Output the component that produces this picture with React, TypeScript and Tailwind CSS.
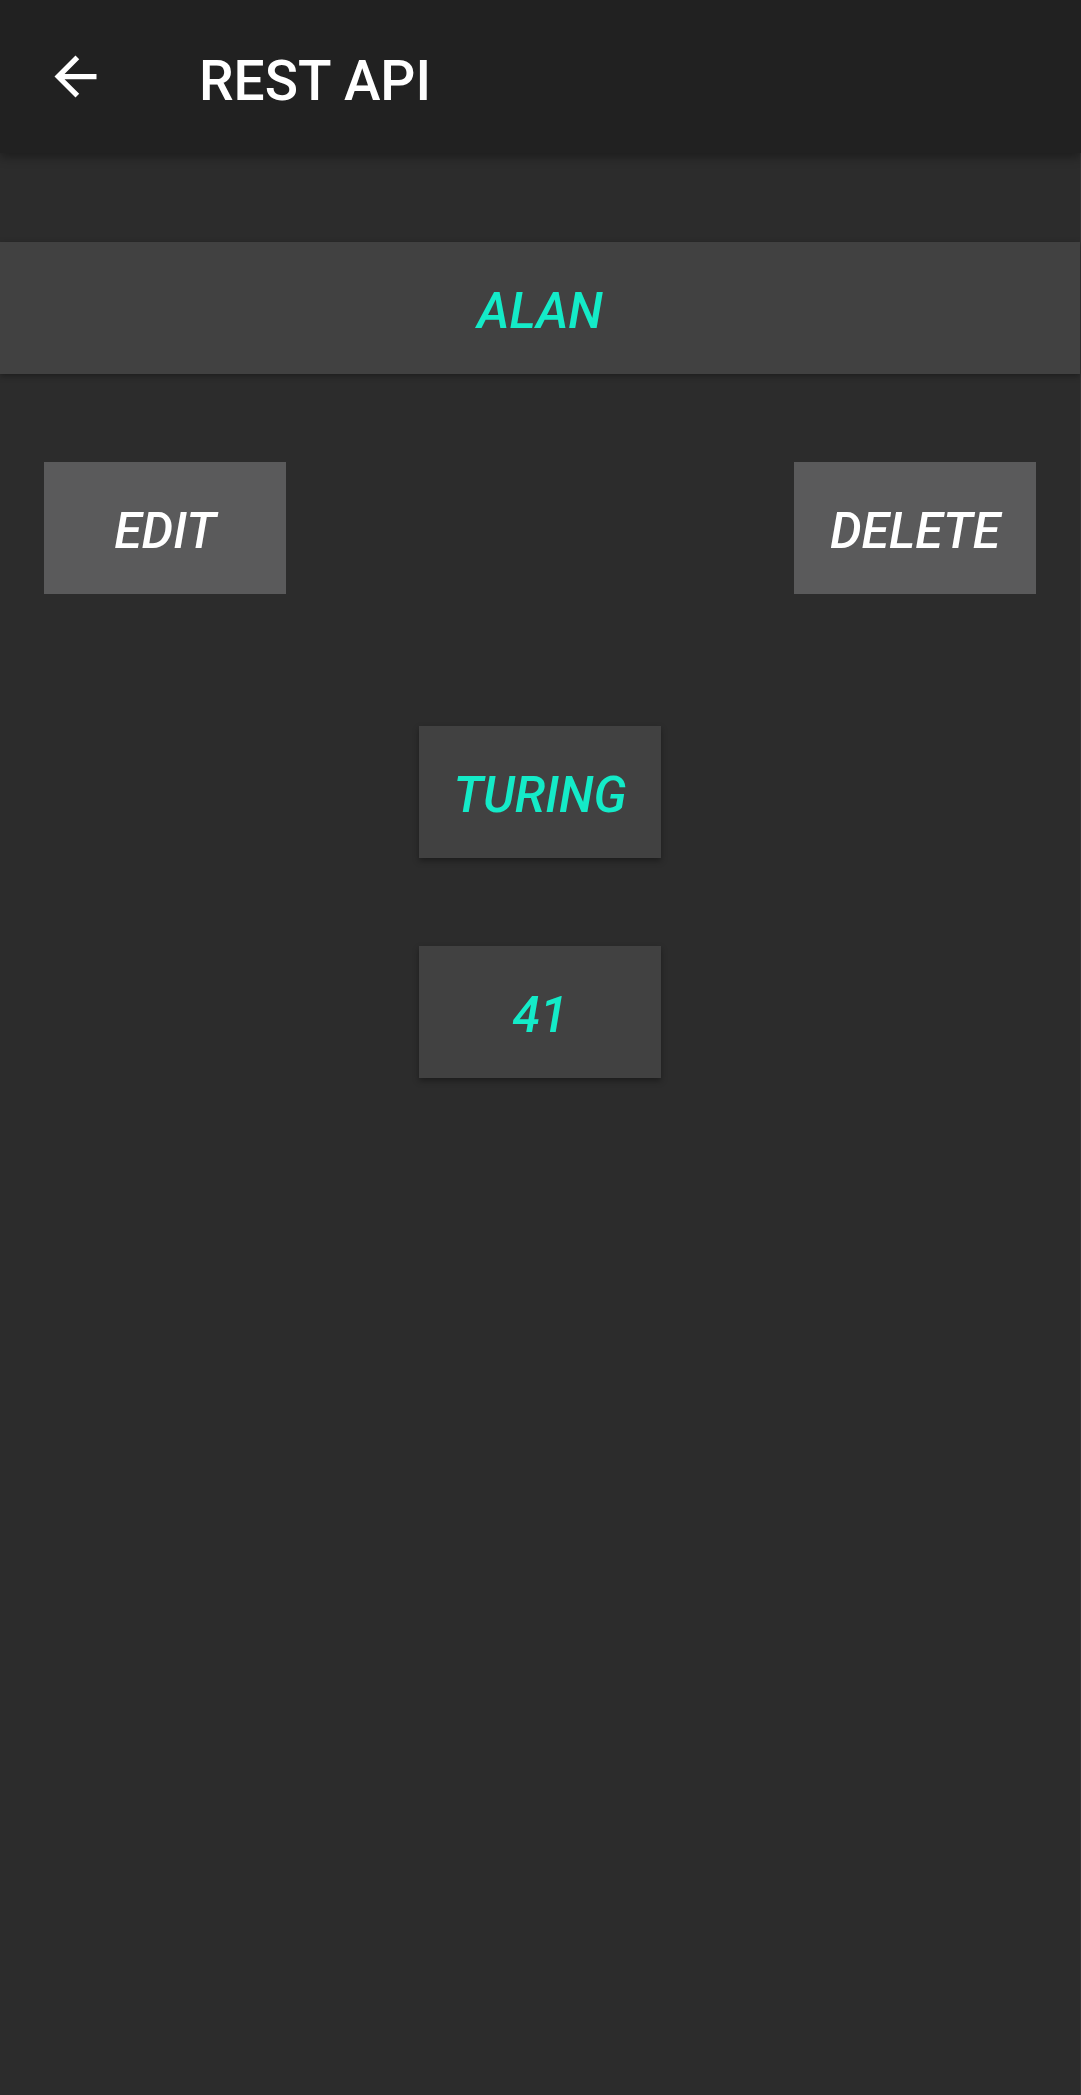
import React from 'react';

const TEAL = 'text-[#14ebc8]';

const Tile: React.FC<{ label: string; tone: 'flat' | 'raised'; accent?: boolean }> = ({ label, tone, accent }) => (
  <div
    className={`flex h-[132px] w-[242px] items-center justify-center ${
      tone === 'flat' ? 'bg-[#5a5a5b]' : 'bg-[#414141] shadow-[0_3px_6px_rgba(0,0,0,0.35)]'
    }`}
  >
    <span className={`mt-[6px] text-[50px] font-medium italic leading-none ${accent ? TEAL : 'text-white'}`}>{label}</span>
  </div>
);

const BackArrow = () => (
  <svg viewBox="0 0 24 24" className="h-[63px] w-[63px]" fill="#ffffff">
    <path d="M20 11H7.83l5.59-5.59L12 4l-8 8 8 8 1.41-1.41L7.83 13H20v-2z" />
  </svg>
);

export default function App() {
  return (
    <div
      className="flex min-h-[2095px] w-[1081px] flex-col bg-[#2c2c2c]"
      style={{ fontFamily: 'Roboto, "Noto Sans", sans-serif' }}
    >
      <header className="relative z-10 flex h-[153px] shrink-0 items-center bg-[#212121] shadow-[0_4px_10px_rgba(0,0,0,0.35)]">
        <div className="ml-[44px] flex items-center">
          <BackArrow />
        </div>
        <h1 className="ml-[92px] mt-[10px] text-[55px] font-medium leading-none text-white">REST API</h1>
      </header>

      <main className="flex flex-1 flex-col border-r border-[#353535]">
        <div className="mt-[89px] flex h-[132px] items-center justify-center bg-[#414141] shadow-[0_2px_6px_rgba(0,0,0,0.35)]">
          <span className={`mt-[6px] text-[50px] font-medium italic leading-none ${TEAL}`}>ALAN</span>
        </div>

        <div className="mt-[88px] flex justify-between pl-[44px] pr-[44px]">
          <Tile label="EDIT" tone="flat" />
          <Tile label="DELETE" tone="flat" />
        </div>

        <div className="mt-[132px] flex flex-col items-center gap-[88px]">
          <Tile label="TURING" tone="raised" accent />
          <Tile label="41" tone="raised" accent />
        </div>
      </main>
    </div>
  );
}
